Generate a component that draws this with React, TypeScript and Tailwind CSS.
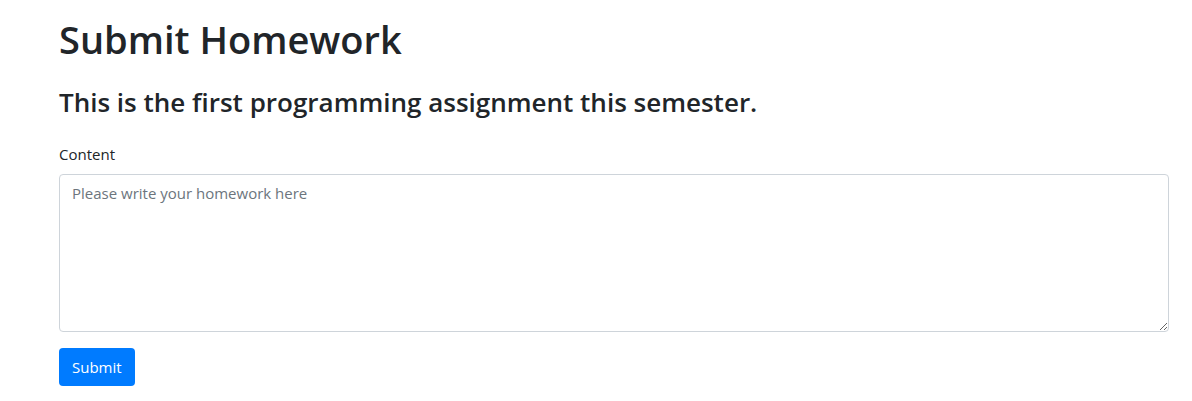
export default function App() {
  return (
    <div
      className="min-h-[401px] bg-white pl-[59px] pr-[23px] pt-4 text-[#212529]"
      style={{ fontFamily: '"Open Sans", "Noto Sans", Arial, sans-serif' }}
    >
      <h1 className="mb-2 text-[38px] font-semibold leading-[47px]">Submit Homework</h1>
      <h3 className="mt-6 mb-2 text-[26px] font-semibold leading-[1.2]">
        This is the first programming assignment this semester.
      </h3>
      <form className="mt-6" onSubmit={(e) => e.preventDefault()}>
        <div className="mb-4">
          <label className="mb-2 inline-block text-[15px] leading-6">Content</label>
          <textarea
            className="block h-[158px] w-full rounded border border-[#ced4da] px-3 py-1.5 text-[15px] leading-6 placeholder:text-[#6c757d] focus:outline-none"
            placeholder="Please write your homework here"
          />
        </div>
        <button
          type="submit"
          className="h-[38px] rounded bg-[#007bff] px-[13px] text-[15px] text-white"
        >
          Submit
        </button>
      </form>
    </div>
  );
}
